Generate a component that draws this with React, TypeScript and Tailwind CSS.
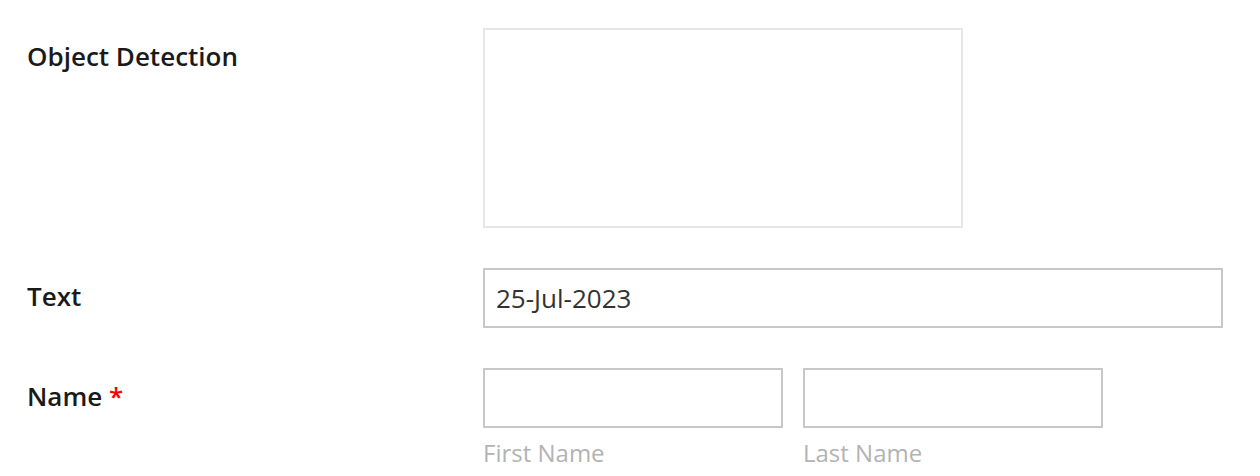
import React from "react";

export default function App() {
  const font = { fontFamily: '"Open Sans", "Noto Sans", sans-serif' };
  return (
    <div className="w-[1260px] h-[476px] bg-white overflow-hidden" style={font}>
      <div className="pt-[28px] pl-[27px] flex flex-col gap-[40px]">
        <div className="flex">
          <div className="w-[456px] text-[26px] leading-[56px] font-semibold text-[#1a1a1a]">
            Object Detection
          </div>
          <div className="w-[480px] h-[200px] border-2 border-[#e6e6e6] bg-white" />
        </div>
        <div className="flex">
          <div className="w-[456px] text-[26px] leading-[56px] font-semibold text-[#1a1a1a]">
            Text
          </div>
          <div className="w-[740px] h-[60px] border-2 border-[#c8c8c8] flex items-center px-[11px] text-[26px] text-[#333333]">
            25-Jul-2023
          </div>
        </div>
        <div className="flex">
          <div className="w-[456px] text-[26px] leading-[56px] font-semibold text-[#1a1a1a]">
            Name <span className="text-[#ff0000]">*</span>
          </div>
          <div className="flex gap-[20px]">
            <div className="flex flex-col">
              <div className="w-[300px] h-[60px] border-2 border-[#c8c8c8]" />
              <div className="mt-[10px] text-[24px] leading-[30px] text-[#b3b3b3]">First Name</div>
            </div>
            <div className="flex flex-col">
              <div className="w-[300px] h-[60px] border-2 border-[#c8c8c8]" />
              <div className="mt-[10px] text-[24px] leading-[30px] text-[#b3b3b3]">Last Name</div>
            </div>
          </div>
        </div>
      </div>
    </div>
  );
}
